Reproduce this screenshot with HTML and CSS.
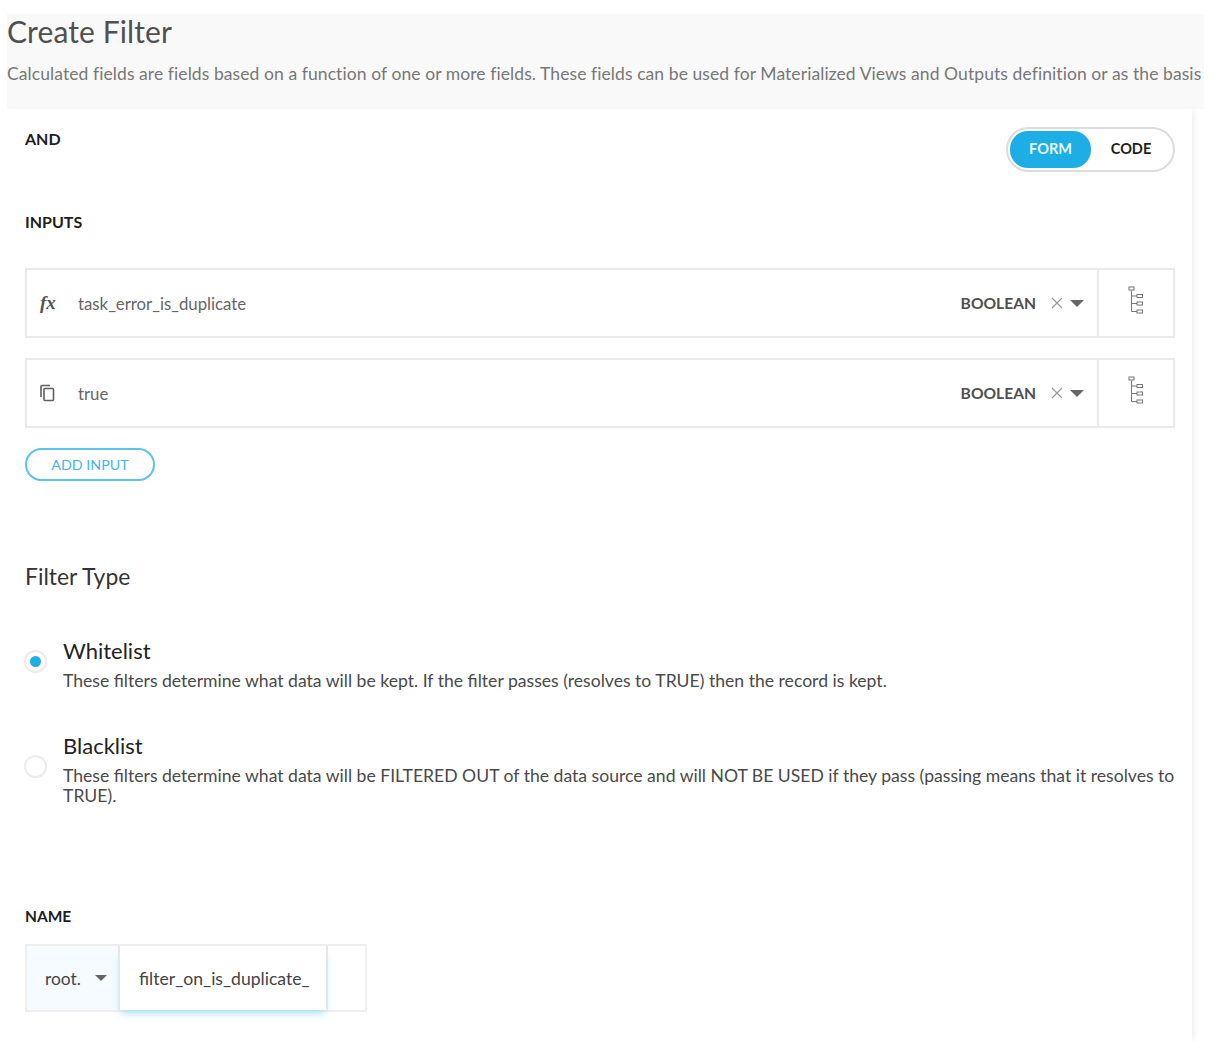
FILE: index.html
```html
<!DOCTYPE html>
<html lang="en">
<head>
<meta charset="utf-8">
<title>Create Filter</title>
<link rel="stylesheet" href="styles.css">
</head>
<body>
<div class="page">
  <header class="head">
    <h1 class="title">Create Filter</h1>
    <p class="desc">Calculated fields are fields based on a function of one or more fields. These fields can be used for Materialized Views and Outputs definition or as the basis</p>
  </header>
  <main class="panel">
    <div class="top">
      <div class="label and-label">AND</div>
      <div class="toggle"><span class="tog tog-on">FORM</span><span class="tog">CODE</span></div>
    </div>
    <div class="label">INPUTS</div>
    <div class="inputs">
      <div class="row">
        <div class="row-main">
          <span class="fx">fx</span>
          <span class="value">task_error_is_duplicate</span>
          <span class="type">BOOLEAN</span>
          <svg class="x" width="12" height="12" viewBox="0 0 12 12"><path d="M1 1l10 10M11 1L1 11"/></svg>
          <span class="caret"></span>
        </div>
        <div class="row-side">
          <svg class="tree" width="16" height="28" viewBox="0 0 16 28"><path class="line" d="M3.5 4.5V25.5H9M3.5 10H9M3.5 17.5H9"/><rect x="1" y="1" width="5" height="3"/><rect x="9" y="8.5" width="5.5" height="3"/><rect x="9" y="16" width="5.5" height="3"/><rect x="9" y="24" width="5.5" height="3"/></svg>
        </div>
      </div>
      <div class="row">
        <div class="row-main">
          <svg class="copy" width="16" height="18" viewBox="0 0 16 18"><path d="M1 13V2.5a1 1 0 0 1 1-1h8"/><rect x="4" y="4.5" width="9.5" height="12" rx="1"/></svg>
          <span class="value">true</span>
          <span class="type">BOOLEAN</span>
          <svg class="x" width="12" height="12" viewBox="0 0 12 12"><path d="M1 1l10 10M11 1L1 11"/></svg>
          <span class="caret"></span>
        </div>
        <div class="row-side">
          <svg class="tree" width="16" height="28" viewBox="0 0 16 28"><path class="line" d="M3.5 4.5V25.5H9M3.5 10H9M3.5 17.5H9"/><rect x="1" y="1" width="5" height="3"/><rect x="9" y="8.5" width="5.5" height="3"/><rect x="9" y="16" width="5.5" height="3"/><rect x="9" y="24" width="5.5" height="3"/></svg>
        </div>
      </div>
    </div>
    <button class="add" type="button">ADD INPUT</button>
    <h2 class="section">Filter Type</h2>
    <div class="option opt-white">
      <span class="radio radio-on"></span>
      <div class="opt-text">
        <div class="opt-title">Whitelist</div>
        <p class="opt-desc">These filters determine what data will be kept. If the filter passes (resolves to TRUE) then the record is kept.</p>
      </div>
    </div>
    <div class="option opt-black">
      <span class="radio"></span>
      <div class="opt-text">
        <div class="opt-title">Blacklist</div>
        <p class="opt-desc">These filters determine what data will be FILTERED OUT of the data source and will NOT BE USED if they pass (passing means that it resolves to TRUE).</p>
      </div>
    </div>
    <div class="label name-label">NAME</div>
    <div class="name">
      <div class="name-prefix"><span>root.</span><span class="caret caret-small"></span></div>
      <div class="name-input"><span class="name-text">filter_on_is_duplicate_</span></div>
      <div class="name-end"></div>
    </div>
  </main>
</div>
</body>
</html>
```
FILE: styles.css
```css
* { box-sizing: border-box; }
html, body { margin: 0; height: 100%; background: #fff; }
body { font-family: Lato, "Open Sans", sans-serif; color: #4a4a4a; overflow: hidden; }
.page { width: 1197px; height: 1042px; margin-left: 7px; padding-top: 14px; }
.head { height: 95px; background: #f9f9f9; overflow: hidden; }
.title { margin: 0; font-size: 30px; line-height: 35px; font-weight: 400; letter-spacing: 0.1px; color: #505050; }
.desc { margin: 14px 0 0; font-size: 17.5px; line-height: 22px; letter-spacing: 0.08px; color: #777; white-space: nowrap; }
.panel { width: 1185px; height: 933px; padding: 18px 17px 0 18px; box-shadow: 4px 0 6px -2px #eee; }
.top { display: flex; justify-content: space-between; align-items: flex-start; height: 85px; }
.label { font-size: 16px; line-height: 20px; font-weight: 700; color: #1e1e1e; }
.and-label { margin-top: 2px; }
.toggle { width: 169px; height: 45px; padding: 2px; border: 2px solid #dcdcdc; border-radius: 23px; display: flex; align-items: center; }
.tog { flex: 1; height: 37px; padding-bottom: 2px; display: flex; align-items: center; justify-content: center; font-size: 14.5px; font-weight: 700; color: #1e1e1e; border-radius: 18px; }
.tog-on { flex: 0 0 81px; background: #1daee6; color: #e8f6fd; }
.inputs { margin-top: 36px; display: flex; flex-direction: column; gap: 20px; }
.row { height: 70px; display: flex; border: 2px solid #eaeaea; }
.row-main { flex: 1; display: flex; align-items: center; padding: 0 13px; }
.row-side { width: 76px; border-left: 2px solid #eaeaea; display: flex; align-items: center; justify-content: center; }
.fx { width: 38px; font-family: "Liberation Serif", serif; font-style: italic; font-weight: 700; font-size: 19px; color: #555; }
.copy { width: 16px; margin-right: 22px; fill: none; stroke: #606060; stroke-width: 1.6; }
.value { flex: 1; font-size: 16.8px; color: #666; }
.type { font-size: 15.6px; font-weight: 700; color: #4f4f4f; }
.x { margin-left: 15px; fill: none; stroke: #9a9a9a; stroke-width: 1.2; }
.caret { width: 0; height: 0; margin-left: 7px; border-style: solid; border-width: 7px 7px 0; border-color: #666 transparent transparent; }
.tree { margin-bottom: 6px; fill: #fff; stroke: #777; stroke-width: 1; }
.tree .line { fill: none; }
.add { display: block; width: 130px; height: 33px; margin-top: 20px; padding: 0; background: #fff; border: 2px solid #5cc3ee; border-radius: 17px; color: #43b6e8; font-family: inherit; font-size: 14.3px; }
.section { margin: 81px 0 0; font-size: 22.9px; line-height: 28px; font-weight: 400; color: #333; }
.option { display: flex; align-items: center; margin-right: -5px; }
.opt-white { margin-top: 47px; }
.opt-black { margin-top: 41px; }
.radio { flex: none; width: 23px; height: 23px; margin: 0 16px 5px -1px; border: 2px solid #ececec; border-radius: 50%; display: flex; align-items: center; justify-content: center; }
.radio-on::after { content: ""; width: 11px; height: 11px; border-radius: 50%; background: #1daee6; }
.opt-text { flex: 1; }
.opt-title { font-size: 22px; line-height: 28px; color: #222; }
.opt-desc { margin: 6px 0 0; font-size: 17.6px; line-height: 20px; color: #4a4a4a; }
.name-label { margin-top: 100px; font-size: 15.5px; }
.name { margin-top: 18px; display: flex; width: 342px; height: 68px; border: 2px solid #eeeeee; }
.name-prefix { width: 91px; background: #f5fbff; display: flex; align-items: center; padding-left: 18px; font-size: 17.4px; color: #444; }
.caret-small { margin-left: 14px; border-width: 6px 6px 0; }
.name-input { width: 210px; border-left: 2px solid #e6e6e6; border-right: 2px solid #e6e6e6; background: #fff; box-shadow: 0 6px 8px -3px #a5dff7; display: flex; align-items: center; padding-left: 19px; font-size: 17.6px; color: #444; }
.name-text { width: 171px; overflow: hidden; white-space: nowrap; }
.name-end { flex: 1; }
```
